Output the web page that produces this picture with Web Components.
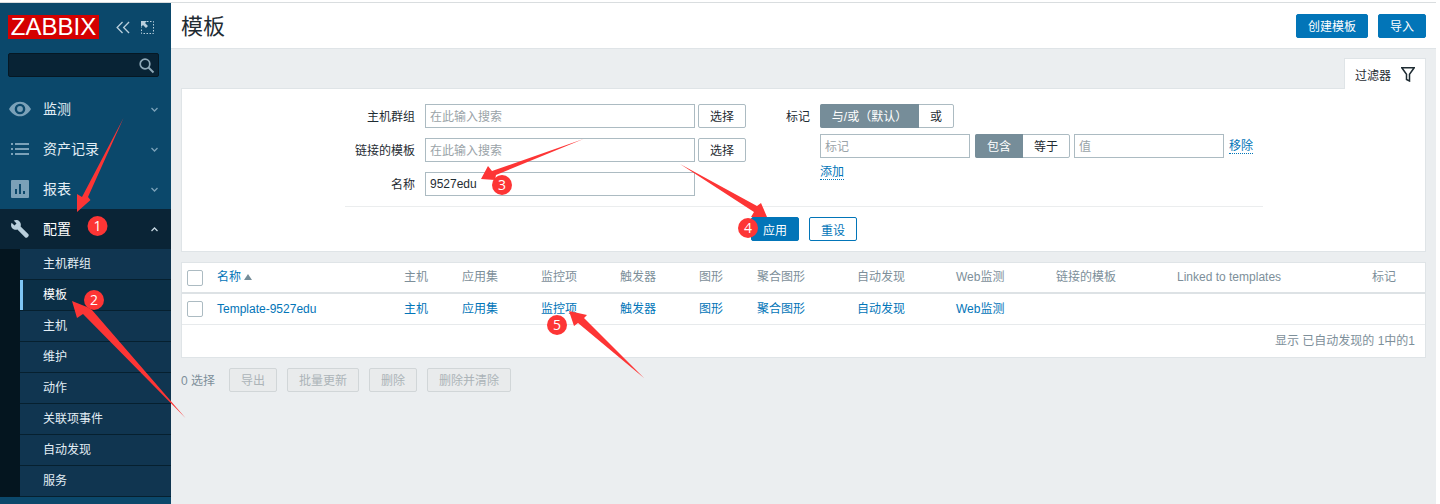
<!DOCTYPE html>
<html lang="zh"><head><meta charset="utf-8">
<style>
html,body{margin:0;padding:0;height:504px;overflow:hidden;background:#fff;font:12px "Liberation Sans","Noto Sans CJK SC",sans-serif;}
</style></head><body>
<zbx-app></zbx-app>
<script>
const FONT='"Liberation Sans","Noto Sans CJK SC",sans-serif';
function def(name,css,html){
  customElements.define(name,class extends HTMLElement{
    constructor(){super();const r=this.attachShadow({mode:'open'});r.innerHTML='<style>'+css+'</style>'+(typeof html==='function'?html(this):html);}
  });
}
const ICONS={
 eye:'<svg width="22" height="16" viewBox="0 0 24 16"><path fill="#7ba1b8" fill-rule="evenodd" d="M12 0C6.500 0 2.400 3.800 0 8c2.400 4.200 6.500 8 12 8s9.600-3.800 12-8c-2.400-4.200-6.500-8-12-8zm0 2.200a5.800 5.800 0 1 1 0 11.600 5.800 5.800 0 0 1 0-11.600zm0 2.600a3.200 3.200 0 1 0 0 6.400 3.200 3.200 0 0 0 0-6.400z"/></svg>',
 list:'<svg width="18" height="12" viewBox="0 0 18 12"><path fill="#7ba1b8" d="M0 0h2v2H0zM4 0h14v2H4zM0 5h2v2H0zM4 5h14v2H4zM0 10h2v2H0zM4 10h14v2H4z"/></svg>',
 chart:'<svg width="18" height="18" viewBox="0 0 18 18"><path fill="#7ba1b8" fill-rule="evenodd" d="M1 0h16a1 1 0 0 1 1 1v16a1 1 0 0 1-1 1H1a1 1 0 0 1-1-1V1a1 1 0 0 1 1-1zm3 9v5h2V9zm4-5v10h2V4zm4 7v3h2v-3z"/></svg>',
 wrench:'<svg width="18" height="18" viewBox="0 0 18 18"><path fill="#b9cfdc" d="M.6 2.700 3.500 5.500 5.500 3.500 2.700.6C4.700-.4 7.100 0 8.500 1.500c1.300 1.300 1.700 3.200 1.100 4.900l7.600 7.600c.7.700.7 1.800 0 2.500l-.7.700c-.7.700-1.800.7-2.500 0L6.400 9.600C4.700 10.200 2.800 9.800 1.500 8.500 0 7.100-.4 4.700.6 2.700z"/></svg>',
 down:'<svg width="7" height="5" viewBox="0 0 7 5"><path fill="none" stroke="#7ba1b8" stroke-width="1.300" d="M.5 1 3.500 4l3-3"/></svg>',
 up:'<svg width="7" height="5" viewBox="0 0 7 5"><path fill="none" stroke="#c5d6e0" stroke-width="1.300" d="M.5 4 3.500 1l3 3"/></svg>'
};
def('zbx-nav-item',
`:host{display:flex;align-items:center;height:40px;color:#e3eef5;font-size:14px;box-sizing:border-box}
 :host([active]){background:#0a2436;color:#fff}
 .i{width:40px;margin-right:3px;flex:none;display:flex;justify-content:center}
 .t{flex:1;padding-bottom:2px}.c{width:7px;margin-right:13px;display:flex}`,
 h=>`<span class="i">${ICONS[h.getAttribute('icon')]}</span><span class="t"><slot></slot></span><span class="c">${h.hasAttribute('active')?ICONS.up:ICONS.down}</span>`);
def('zbx-sub-item',
`:host{display:flex;align-items:center;height:31px;box-sizing:border-box;padding:0 0 3px 23px;color:#e3eef5;font-size:12px;background:#103550;border-bottom:1px solid #06202f}
 :host([active]){background:#0b2f46;color:#fff;box-shadow:inset 3px 0 0 #7fc6f5}`,
 `<slot></slot>`);
def('zbx-sidebar',
`:host{display:flex;flex-direction:column;width:171px;flex:none;background:#0b486b;box-sizing:border-box}
 .logo{display:flex;align-items:center;padding:12px 0 0 8px}
 .logo b{background:#d40000;color:#fff;font:400 24px/24px "Liberation Sans",sans-serif;height:24px;width:91px;text-align:center;display:block;white-space:nowrap}
 .ctl{display:flex;gap:11px;margin-left:17px;align-items:center}
 .search{margin:14px 0 0 8px;width:151px;height:24px;background:#082335;border:1px solid #051824;border-radius:2px;box-sizing:border-box;display:flex;justify-content:flex-end;align-items:center;padding-right:3px}
 nav{margin-top:12px;display:flex;flex-direction:column}
 .subwrap{display:flex;background:#04151f}
 .subs{margin-left:20px;width:151px;display:flex;flex-direction:column}`,
 `<div class="logo"><b>ZABBIX</b><span class="ctl">
   <svg width="14" height="13" viewBox="0 0 15 13"><path fill="none" stroke="#b9cfdc" stroke-width="1.400" d="M7 .7 1.200 6.500 7 12.300M14 .7 8.200 6.500 14 12.300"/></svg>
   <svg width="13" height="13" viewBox="0 0 13 13"><path fill="none" stroke="#b9cfdc" stroke-dasharray="1.500 1.500" d="M6 .5h6.500v12H.5V6.500"/><path fill="#b9cfdc" d="M0 0h6L4 2l3 3-2 2-3-3-2 2z"/></svg>
 </span></div>
 <div class="search"><svg width="17" height="17" viewBox="0 0 17 17"><circle cx="7" cy="7" r="4.800" fill="none" stroke="#8fa9b8" stroke-width="1.700"/><path stroke="#8fa9b8" stroke-width="2" d="m10.500 10.500 5 5"/></svg></div>
 <nav><zbx-nav-item icon="eye">监测</zbx-nav-item><zbx-nav-item icon="list">资产记录</zbx-nav-item><zbx-nav-item icon="chart">报表</zbx-nav-item><zbx-nav-item icon="wrench" active>配置</zbx-nav-item>
 <div class="subwrap"><div class="subs"><zbx-sub-item>主机群组</zbx-sub-item><zbx-sub-item active>模板</zbx-sub-item><zbx-sub-item>主机</zbx-sub-item><zbx-sub-item>维护</zbx-sub-item><zbx-sub-item>动作</zbx-sub-item><zbx-sub-item>关联项事件</zbx-sub-item><zbx-sub-item>自动发现</zbx-sub-item><zbx-sub-item>服务</zbx-sub-item></div></div></nav>`);
def('zbx-button',
`:host{display:inline-flex;align-items:center;justify-content:center;box-sizing:border-box;height:24px;border-radius:2px;font-size:12px;border:1px solid #0275b8;background:#0275b8;color:#fff;white-space:nowrap}
 :host([kind=outline]){background:#fff;color:#0275b8}
 :host([kind=plain]){background:#fff;color:#1f2c33;border-color:#acbbc2;padding-bottom:2px}
 :host([kind=off]){background:#e9ebec;color:#acb4b8;border-color:#d1d6d8;padding-bottom:2px}`,`<slot></slot>`);
def('zbx-input',
`:host{display:flex;align-items:center;box-sizing:border-box;height:24px;background:#fff;border:1px solid #acbbc2;padding:0 4px;font-size:12px;color:#1f2c33;white-space:nowrap}
 ::slotted(i){font-style:normal;color:#9aa3a8;display:block;padding-bottom:2px}`,`<slot></slot>`);
def('zbx-seg',
`:host{display:inline-flex;height:24px;box-sizing:border-box;border:1px solid #acbbc2;border-radius:2px;background:#fff;font-size:12px;color:#1f2c33;white-space:nowrap}
 ::slotted(span){display:flex;align-items:center;justify-content:center;padding-bottom:2px;box-sizing:border-box}
 ::slotted(.on){background:#768d99;color:#fff;margin:-1px 0 -1px -1px;border-radius:2px 0 0 2px}`,`<slot></slot>`);
def('zbx-link',
`:host{color:#0275b8;border-bottom:1px dotted #0275b8;font-size:12px;line-height:14px;display:inline-block}`,`<slot></slot>`);
def('zbx-filter',
`:host{display:block;color:#1f2c33;font-size:12px}
 .tabrow{display:flex;justify-content:flex-end;height:30px}
 .tab{height:31px;background:#fff;border:1px solid #dfe4e7;border-bottom:0;box-sizing:border-box;width:82px;display:flex;align-items:center;padding-left:10px;gap:10px;position:relative;z-index:1}
 .panel{background:#fff;border:1px solid #dfe4e7;height:164px;box-sizing:border-box;display:flex;flex-direction:column}
 .cols{display:flex;height:117px;flex:none;padding-top:15px;box-sizing:border-box}
 .left{display:grid;grid-template-columns:233px 270px 48px;column-gap:10px;row-gap:10px;grid-auto-rows:24px;align-content:start;align-items:center;width:592px}
 .left .l{text-align:right;padding-bottom:2px}
 .left zbx-button{margin-left:-7px;width:48px}
 .tags{display:flex;flex-direction:column;margin-left:12px}
 .r{display:flex;align-items:center;gap:5px}
 .tl{width:24px;margin-right:10px;flex:none;white-space:nowrap;padding-bottom:2px}
 .btns{margin:0 162px 0 163px;border-top:1px solid #ebedee;height:36px;box-sizing:border-box;flex:none;padding-top:10px;display:flex;justify-content:center;gap:10px}
 .btns zbx-button{width:48px}`,
 `<div class="tabrow"><div class="tab">过滤器 <svg width="14" height="15" viewBox="0 0 14 15"><path fill="none" stroke="#1f2c33" stroke-width="1.500" d="M.8.800h12.400L8.500 7.200v6.800L5.500 12.500V7.200z"/></svg></div></div>
 <div class="panel"><div class="cols"><div class="left">
   <span class="l">主机群组</span><zbx-input><i>在此输入搜索</i></zbx-input><zbx-button kind="plain">选择</zbx-button>
   <span class="l">链接的模板</span><zbx-input><i>在此输入搜索</i></zbx-input><zbx-button kind="plain">选择</zbx-button>
   <span class="l">名称</span><zbx-input>9527edu</zbx-input><span></span>
 </div>
 <div class="tags">
   <div class="r" style="gap:0"><span class="tl">标记</span><zbx-seg><span class="on" style="width:99px">与/或（默认）</span><span style="width:34px">或</span></zbx-seg></div>
   <div class="r" style="margin:6px 0 0 34px"><zbx-input style="width:150px"><i>标记</i></zbx-input><zbx-seg style="margin-right:-1px"><span class="on" style="width:48px">包含</span><span style="width:46px">等于</span></zbx-seg><zbx-input style="width:150px"><i>值</i></zbx-input><zbx-link>移除</zbx-link></div>
   <div class="r" style="margin:7px 0 0 34px"><zbx-link>添加</zbx-link></div>
 </div></div>
 <div class="btns"><zbx-button>应用</zbx-button><zbx-button kind="outline">重设</zbx-button></div></div>`);
const COLS=['主机','应用集','监控项','触发器','图形','聚合图形','自动发现','Web监测'];
def('zbx-table',
`:host{display:block;background:#fff;border:1px solid #dfe4e7;font-size:12px;line-height:16px;box-sizing:border-box;height:96px}
 .g{display:grid;grid-template-columns:35px 187px 58px 79px 79px 79px 58px 100px 99px 100px 121px 195px 53px;align-items:center}
 .h{height:29px;border-bottom:2px solid #dde2e5;color:#7d8f9a;box-sizing:content-box}
 .h span:not(.cb){margin-bottom:2px}
 .b{height:30px;border-bottom:1px solid #e7eaec;color:#0275b8;box-sizing:content-box}
 .cb{width:16px;height:16px;border:1px solid #acbbc2;border-radius:2px;box-sizing:border-box;margin-left:5px;background:#fff}
 .s{color:#0275b8;display:flex;align-items:center;gap:3px}
 .f{height:32px;display:flex;align-items:center;justify-content:flex-end;padding-right:10px;color:#7d8f9a}`,
 `<div class="g h"><span class="cb"></span><span class="s">名称 <svg width="8" height="6" viewBox="0 0 8 6"><path fill="#768d99" d="M0 6 4 0l4 6z"/></svg></span>${COLS.map(c=>`<span>${c}</span>`).join('')}<span>链接的模板</span><span>Linked to templates</span><span>标记</span></div>
 <div class="g b"><span class="cb"></span><span>Template-9527edu</span>${COLS.map(c=>`<span>${c}</span>`).join('')}</div>
 <div class="f">显示 已自动发现的 1中的1</div>`);
const ARROWS=[
 '123.500,118 88,197 90.500,200 77,212 77,194 82,197',
 '185.500,418 92,310 87,307 72,301 77,318 83,314',
 '583.500,139 492,171 488,166 481,179 495,180 496,175',
 '680,164 757,206 761,203 767,217 751,217 754,212',
 '644,378 584,318 587,315 569,311 574,326 578,323'];
const BADGES=[[97.5,226,1],[94,300,2],[502,185,3],[748,228,4],[557,325,5]];
def('zbx-callout',
`:host{position:absolute;inset:0;pointer-events:none;display:block;z-index:5}
 svg{position:absolute;left:0;top:0}
 text{font:14px "Open Sans","Liberation Sans",sans-serif;fill:#fff;text-anchor:middle}`,
 `<svg width="1440" height="504" viewBox="0 0 1440 504">
  ${ARROWS.map(p=>`<polygon points="${p}" fill="#fd3535"/>`).join('')}
  ${BADGES.map(([x,y,n])=>`<circle cx="${x}" cy="${y}" r="10" fill="#fd3535"/><text x="${x}" y="${y+5}">${n}</text>`).join('')}
 </svg>`);
def('zbx-app',
`:host{display:block;height:504px;position:relative;font:12px ${FONT};overflow:hidden}
 .wrap{display:flex;height:502px;margin-top:2px;margin-right:4px;background:#ebeef0;border-top:1px solid #d9dddf;box-sizing:border-box}
 main{flex:1;min-width:0;display:flex;flex-direction:column}
 header{height:45px;background:#fff;border-bottom:1px solid #dfe4e7;display:flex;align-items:center;padding:0 10px;justify-content:space-between;flex:none}
 h1{font:400 22px ${FONT};margin:0;padding-bottom:3px;color:#1f2c33}
 .acts{display:flex;gap:10px}
 .content{padding:9px 10px 0;display:flex;flex-direction:column}
 .gap{height:10px}
 .foot{display:flex;align-items:center;gap:10px;margin-top:10px;color:#7d8f9a}`,
 `<div class="wrap"><zbx-sidebar></zbx-sidebar><main>
   <header><h1>模板</h1><div class="acts"><zbx-button style="width:72px">创建模板</zbx-button><zbx-button style="width:48px">导入</zbx-button></div></header>
   <div class="content"><zbx-filter></zbx-filter><div class="gap"></div><zbx-table></zbx-table>
   <div class="foot"><span style="margin-right:4px;padding-bottom:2px">0 选择</span><zbx-button kind="off" style="width:48px">导出</zbx-button><zbx-button kind="off" style="width:72px">批量更新</zbx-button><zbx-button kind="off" style="width:48px">删除</zbx-button><zbx-button kind="off" style="width:84px">删除并清除</zbx-button></div></div>
 </main></div><zbx-callout></zbx-callout>`);
</script></body></html>
